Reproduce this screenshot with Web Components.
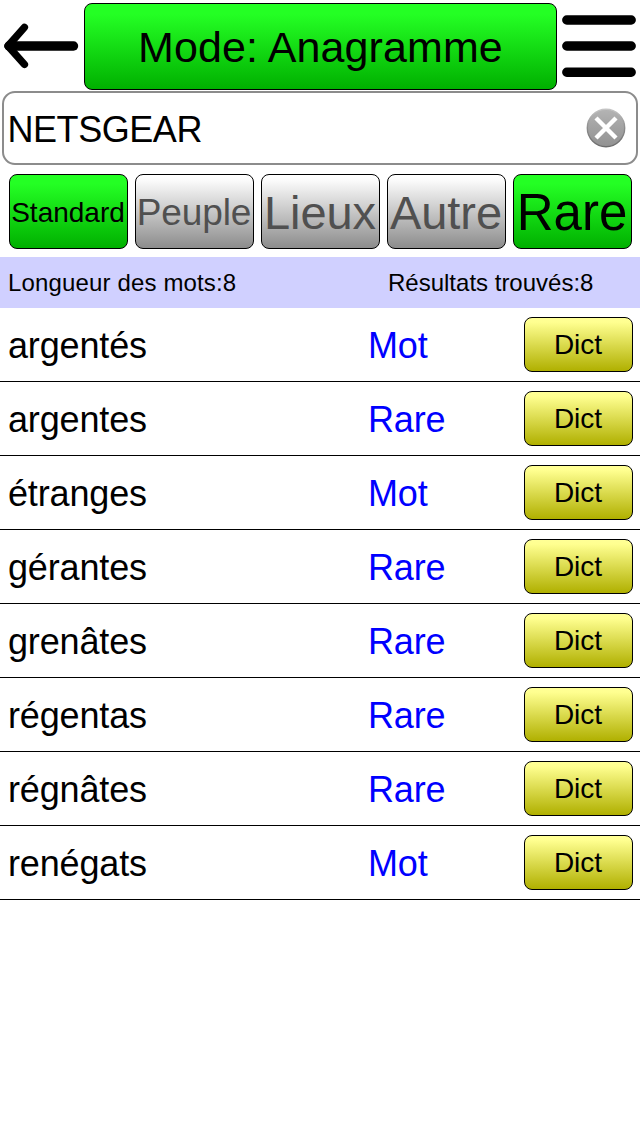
<!DOCTYPE html>
<html lang="fr">
<head>
<meta charset="utf-8">
<title>Mode: Anagramme</title>
<style>
  body {
    margin: 0;
    background: #fff;
    color: #000;
    font-family: "Liberation Sans", Arial, sans-serif;
  }
</style>
</head>
<body>
<anagram-app></anagram-app>

<script>
class GlossButton extends HTMLElement {
  constructor() {
    super();
    const shadow = this.attachShadow({ mode: 'open' });
    shadow.innerHTML = `
      <style>
        :host {
          display: flex;
          align-items: center;
          justify-content: center;
          box-sizing: border-box;
          border: 1px solid #000;
          border-radius: 8px;
          white-space: nowrap;
          line-height: 1;
          cursor: pointer;
          background: linear-gradient(#fff 0%, #fafafa 8%, #8c8c8c 100%);
          color: #505050;
        }
        :host([color="green"]) {
          background: linear-gradient(#24ff24 0%, #24ff24 12%, #00b000 100%);
          color: #000;
        }
        :host([color="yellow"]) {
          background: linear-gradient(#ffff96 0%, #ffff90 8%, #b0b000 100%);
          color: #000;
        }
      </style>
      <slot></slot>
    `;
  }
}

class AppIcon extends HTMLElement {
  connectedCallback() {
    const icons = {
      back: `
        <svg width="84" height="92" viewBox="0 0 84 92" fill="none" stroke="#000" stroke-linecap="round" stroke-linejoin="round">
          <path d="M9 46H73.5" stroke-width="9.4"/>
          <path d="M24.4 27.4L8 46L24.4 64.4" stroke-width="7.4"/>
        </svg>`,
      menu: `
        <svg width="83" height="92" viewBox="0 0 83 92" stroke="#000" stroke-width="9.4" stroke-linecap="round">
          <path d="M9.8 20H74.2M9.8 46H74.2M9.8 72.3H74.2"/>
        </svg>`,
      clear: `
        <svg width="40" height="40" viewBox="0 0 40 40">
          <defs>
            <linearGradient id="g" x1="0" y1="0" x2="0" y2="1">
              <stop offset="0" stop-color="#b4b4b4"/>
              <stop offset=".5" stop-color="#a2a2a2"/>
              <stop offset="1" stop-color="#929292"/>
            </linearGradient>
            <linearGradient id="r" x1="0" y1="0" x2="0" y2="1">
              <stop offset="0" stop-color="#c4c4c4"/>
              <stop offset=".5" stop-color="#8c8c8c"/>
              <stop offset="1" stop-color="#6c6c6c"/>
            </linearGradient>
          </defs>
          <circle cx="20" cy="20" r="18.7" fill="url(#g)" stroke="url(#r)" stroke-width="1.4"/>
          <path d="M10 10L30 30M30 10L10 30" stroke="#fff" stroke-width="4.4"/>
        </svg>`
    };
    const shadow = this.attachShadow({ mode: 'open' });
    shadow.innerHTML = `
      <style>
        :host { display: block; flex: none; }
        svg { display: block; }
      </style>
      ${icons[this.getAttribute('name')]}
    `;
  }
}

class SearchField extends HTMLElement {
  constructor() {
    super();
    const shadow = this.attachShadow({ mode: 'open' });
    shadow.innerHTML = `
      <style>
        :host {
          display: flex;
          align-items: center;
          justify-content: space-between;
          box-sizing: border-box;
          height: 74px;
          margin: 0 2px;
          padding: 0 10px 0 3.5px;
          border: 2px solid #8c8c8c;
          border-radius: 13px;
          font-size: 36px;
          line-height: 40px;
          letter-spacing: -0.45px;
        }
        span { padding-top: 3px; }
      </style>
      <span><slot></slot></span>
      <app-icon name="clear"></app-icon>
    `;
  }
}

class ResultRow extends HTMLElement {
  connectedCallback() {
    const shadow = this.attachShadow({ mode: 'open' });
    shadow.innerHTML = `
      <style>
        :host {
          display: grid;
          grid-template-columns: 360px 156px 109px;
          align-items: center;
          box-sizing: border-box;
          height: 74px;
          padding-left: 8px;
          border-bottom: 1px solid #000;
          font-size: 36px;
          line-height: 40px;
          letter-spacing: -0.15px;
        }
        .kind { color: #0000ff; }
        .word, .kind { padding-top: 2px; }
        gloss-button {
          height: 55px;
          font-size: 28px;
          padding-right: 1px;
          letter-spacing: 0;
        }
      </style>
      <span class="word"><slot></slot></span>
      <span class="kind">${this.getAttribute('kind')}</span>
      <gloss-button color="yellow">Dict</gloss-button>
    `;
  }
}

class AnagramApp extends HTMLElement {
  constructor() {
    super();
    const results = [
      ['argentés', 'Mot'],
      ['argentes', 'Rare'],
      ['étranges', 'Mot'],
      ['gérantes', 'Rare'],
      ['grenâtes', 'Rare'],
      ['régentas', 'Rare'],
      ['régnâtes', 'Rare'],
      ['renégats', 'Mot']
    ];
    const shadow = this.attachShadow({ mode: 'open' });
    shadow.innerHTML = `
      <style>
        :host {
          display: block;
          width: 640px;
          height: 1136px;
          overflow: hidden;
        }
        header {
          display: flex;
          height: 91px;
        }
        .mode {
          width: 473px;
          height: 87px;
          margin-top: 3px;
          padding-top: 2px;
          font-size: 43px;
          letter-spacing: 0.1px;
        }
        nav {
          display: grid;
          grid-template-columns: repeat(5, 119px);
          gap: 7px;
          padding: 9px 9px 8px;
        }
        nav gloss-button {
          height: 75px;
          padding: 2px 1px 0 0;
        }
        .s28 { font-size: 28px; }
        .s37 { font-size: 37px; letter-spacing: -0.1px; }
        .s47 { font-size: 47px; letter-spacing: -0.1px; }
        .s51 { font-size: 51px; }
        .summary {
          display: grid;
          grid-template-columns: 380px auto;
          align-items: center;
          height: 51px;
          padding-left: 8px;
          background: #d0d0ff;
          font-size: 24px;
          line-height: 28px;
        }
        .length { letter-spacing: 0.15px; }
      </style>
      <header>
        <app-icon name="back"></app-icon>
        <gloss-button class="mode" color="green">Mode: Anagramme</gloss-button>
        <app-icon name="menu"></app-icon>
      </header>
      <search-field>NETSGEAR</search-field>
      <nav>
        <gloss-button class="s28" color="green">Standard</gloss-button>
        <gloss-button class="s37">Peuple</gloss-button>
        <gloss-button class="s47">Lieux</gloss-button>
        <gloss-button class="s47">Autre</gloss-button>
        <gloss-button class="s51" color="green">Rare</gloss-button>
      </nav>
      <div class="summary">
        <span class="length">Longueur des mots:8</span>
        <span>Résultats trouvés:8</span>
      </div>
      <main>
        ${results.map(([word, kind]) => `<result-row kind="${kind}">${word}</result-row>`).join('')}
      </main>
    `;
  }
}

customElements.define('gloss-button', GlossButton);
customElements.define('app-icon', AppIcon);
customElements.define('search-field', SearchField);
customElements.define('result-row', ResultRow);
customElements.define('anagram-app', AnagramApp);
</script>
</body>
</html>
